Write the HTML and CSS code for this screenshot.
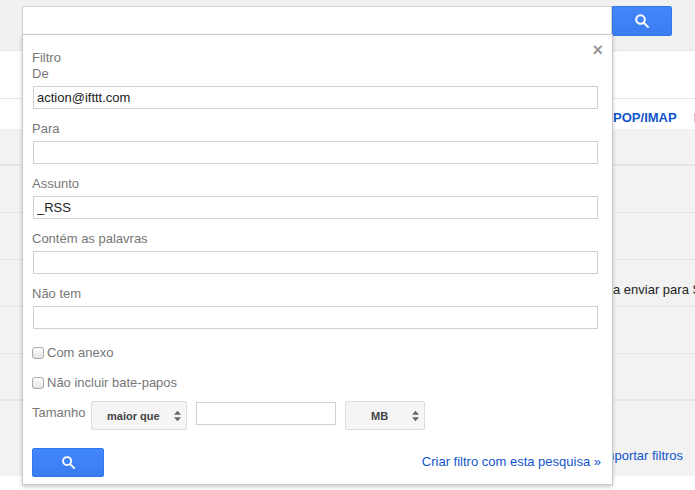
FILE: index.html
```html
<!DOCTYPE html>
<html lang="pt">
<head>
    <meta charset="UTF-8">
    <meta name="viewport" content="width=device-width, initial-scale=1.0">
    <title>Filtros</title>
    <link rel="stylesheet" href="styles.css">
</head>
<body>
    <div class="topbar">
        <div class="search-box"></div>
        <button class="search-btn top-btn" type="button">
            <svg class="search-icon" viewBox="0 0 16 16"><circle cx="6.5" cy="6.5" r="4.3"/><path d="M9.7 9.7L14.6 14.6"/></svg>
        </button>
    </div>
    <div class="subbar"></div>
    <div class="tabs">
        <a class="tab">Encaminhamento e POP/IMAP</a>
        <a class="tab">Labs</a>
    </div>
    <div class="settings">
        <div class="row row-head"></div>
        <div class="row"></div>
        <div class="row"></div>
        <div class="row row-text">a enviar para Spam</div>
        <div class="row"></div>
        <div class="row row-last"></div>
        <div class="row-foot"><a class="import-link">Importar filtros</a></div>
    </div>

    <div class="dropdown">
        <span class="close">&times;</span>
        <div class="title">Filtro</div>

        <label class="field-label">De</label>
        <input class="field" type="text" value="action@ifttt.com">
        <label class="field-label">Para</label>
        <input class="field" type="text">
        <label class="field-label">Assunto</label>
        <input class="field" type="text" value="_RSS">
        <label class="field-label">Contém as palavras</label>
        <input class="field" type="text">
        <label class="field-label">Não tem</label>
        <input class="field" type="text">

        <label class="check-row first"><input type="checkbox"> Com anexo</label>
        <label class="check-row"><input type="checkbox"> Não incluir bate-papos</label>

        <div class="size-row">
            <span class="size-label">Tamanho</span>
            <div class="size-select compare">
                <span>maior que</span>
                <svg class="arrows" viewBox="0 0 8 12"><path d="M4 0L8 4.5H0zM4 12L0 7.5H8z"/></svg>
            </div>
            <input class="size-input" type="text">
            <div class="size-select unit">
                <span>MB</span>
                <svg class="arrows" viewBox="0 0 8 12"><path d="M4 0L8 4.5H0zM4 12L0 7.5H8z"/></svg>
            </div>
        </div>

        <div class="actions">
            <button class="search-btn bottom-btn" type="button">
                <svg class="search-icon" viewBox="0 0 16 16"><circle cx="6.5" cy="6.5" r="4.3"/><path d="M9.7 9.7L14.6 14.6"/></svg>
            </button>
            <a class="create-link">Criar filtro com esta pesquisa »</a>
        </div>
    </div>
</body>
</html>
```

FILE: styles.css
```css
body {
    margin: 0;
    height: 490px;
    overflow: hidden;
    position: relative;
    background-color: #fff;
    font-family: "Liberation Sans", Arial, sans-serif;
    font-size: 13px;
    color: #222;
}

.topbar {
    display: flex;
    height: 51px;
    padding: 6px 0 0 22px;
    box-sizing: border-box;
    background-color: #f1f1f1;
    border-bottom: 1px solid #e5e5e5;
}

.search-box {
    width: 590px;
    height: 30px;
    box-sizing: border-box;
    background-color: #fff;
    border: 1px solid #d0d0d0;
}

.search-btn {
    display: flex;
    align-items: center;
    justify-content: center;
    padding: 0;
    border: 1px solid #3079ed;
    background-color: #3f80f5;
    background-image: linear-gradient(#4387fd, #3b7cf0);
}

.top-btn {
    width: 60px;
    height: 30px;
    border-radius: 0 2px 2px 0;
}

.search-icon {
    width: 16px;
    height: 16px;
    fill: none;
    stroke: #fff;
    stroke-width: 2;
}

.subbar {
    height: 47px;
    border-bottom: 1px solid #e5e5e5;
}

.tabs {
    display: flex;
    justify-content: flex-end;
    gap: 17px;
    height: 30px;
    line-height: 38px;
    margin-right: -29px;
    white-space: nowrap;
}

.tab {
    color: #1155cc;
    font-weight: bold;
}

.settings {
    background-color: #f2f2f2;
    height: 347px;
}

.row {
    height: 46px;
    border-bottom: 1px solid #e5e5e5;
}

.row-head {
    height: 35px;
    border-bottom: 2px solid #e5e5e5;
}

.row-last {
    height: 45px;
    border-bottom: 2px solid #e5e5e5;
}

.row-text {
    padding-left: 613px;
    line-height: 60px;
    white-space: nowrap;
    overflow: hidden;
}

.row-foot {
    padding-left: 600px;
}

.import-link {
    display: block;
    padding-top: 47px;
    color: #1155cc;
    white-space: nowrap;
}

/* painel do filtro, por cima da pagina */
.dropdown {
    position: absolute;
    left: 22px;
    top: 34px;
    width: 591px;
    height: 451px;
    box-sizing: border-box;
    padding: 14px 14px 0 9px;
    background-color: #fff;
    border: 1px solid #c8c8c8;
    box-shadow: 0 2px 4px rgba(0,0,0,0.2);
    color: #777;
}

.close {
    position: absolute;
    right: 9px;
    top: 5px;
    color: #999;
    font-size: 18px;
    font-weight: bold;
    line-height: 20px;
}

.title {
    line-height: 17px;
}

.field-label {
    display: block;
    line-height: 15px;
    margin-bottom: 5px;
}

.field {
    display: block;
    width: 565px;
    height: 23px;
    box-sizing: border-box;
    margin: 0 0 12px 1px;
    padding: 0 3px;
    border: 1px solid #d0d0d0;
    font-family: inherit;
    font-size: 13px;
    color: #222;
    outline: none;
}

.check-row {
    display: flex;
    align-items: center;
    gap: 3px;
    height: 17px;
    margin-bottom: 13px;
}

.check-row.first {
    margin-top: 15px;
}

.check-row input {
    appearance: none;
    width: 12px;
    height: 12px;
    margin: 0;
    border: 1px solid #aaa;
    border-radius: 3px;
    background-image: linear-gradient(#fff, #e4e4e4);
}

.size-row {
    display: flex;
    align-items: flex-start;
    margin-top: -3px;
}

.size-label {
    line-height: 24px;
    width: 59px;
}

.size-select {
    display: flex;
    align-items: center;
    justify-content: space-between;
    height: 29px;
    box-sizing: border-box;
    padding: 0 5px 0 15px;
    background-color: #f5f5f5;
    border: 1px solid #dcdcdc;
    border-radius: 2px;
    color: #444;
    font-size: 11px;
    font-weight: bold;
}

.compare {
    width: 96px;
}

.unit {
    width: 80px;
    padding-left: 25px;
}

.arrows {
    width: 7px;
    height: 12px;
    fill: #666;
}

.size-input {
    width: 140px;
    height: 23px;
    box-sizing: border-box;
    margin: 1px 9px 0;
    border: 1px solid #d0d0d0;
    outline: none;
}

.actions {
    display: flex;
    align-items: flex-start;
    justify-content: space-between;
    margin-top: 18px;
    margin-right: -3px;
}

.bottom-btn {
    width: 72px;
    height: 29px;
    border-radius: 2px;
}

.bottom-btn .search-icon {
    width: 15px;
    height: 15px;
}

.create-link {
    margin-top: 6px;
    color: #1155cc;
    font-size: 13px;
}
```
